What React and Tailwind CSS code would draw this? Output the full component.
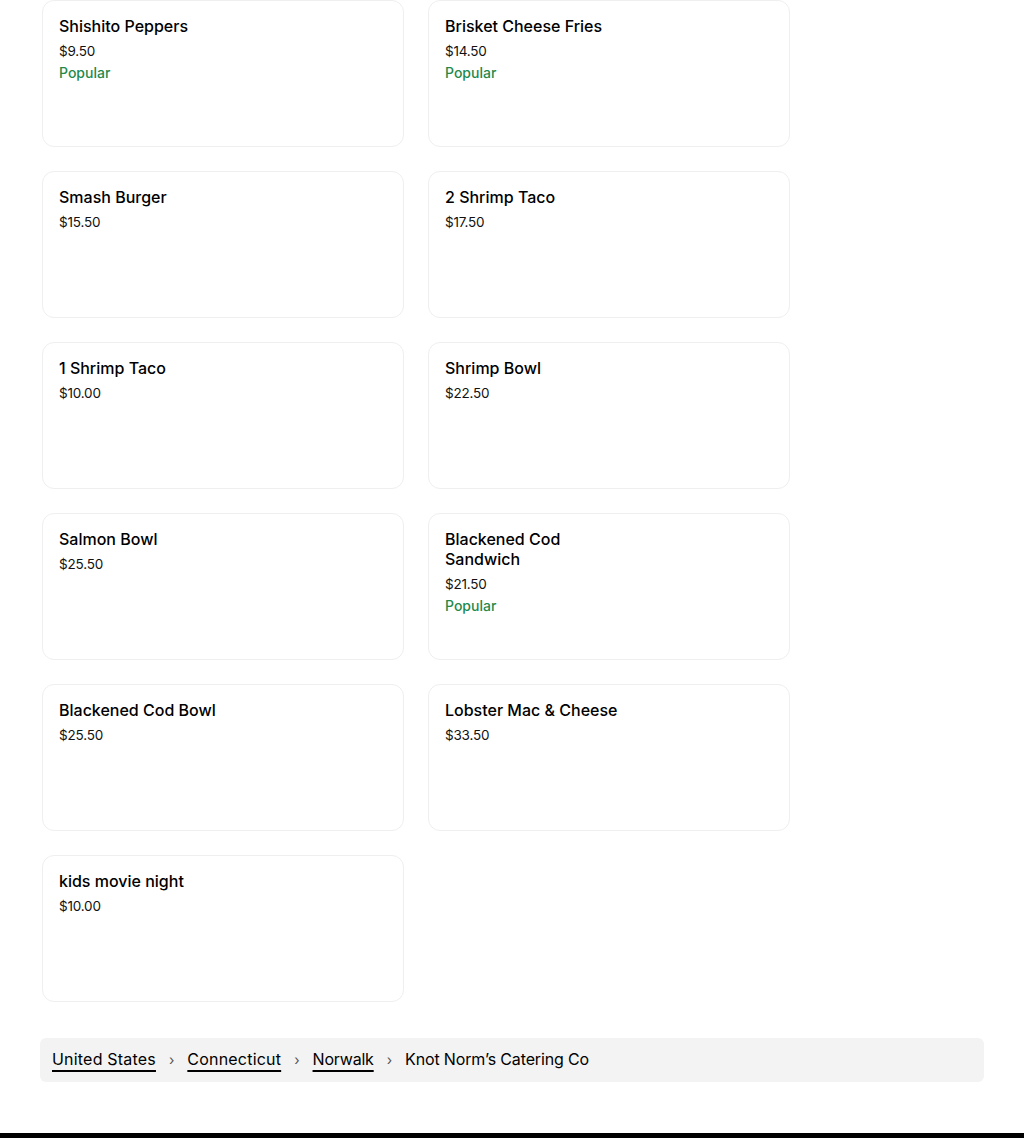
import React from "react";

const items = [
  { name: "Shishito Peppers", price: "$9.50", popular: true },
  { name: "Brisket Cheese Fries", price: "$14.50", popular: true },
  { name: "Smash Burger", price: "$15.50" },
  { name: "2 Shrimp Taco", price: "$17.50" },
  { name: "1 Shrimp Taco", price: "$10.00" },
  { name: "Shrimp Bowl", price: "$22.50" },
  { name: "Salmon Bowl", price: "$25.50" },
  { name: "Blackened Cod Sandwich", price: "$21.50", popular: true },
  { name: "Blackened Cod Bowl", price: "$25.50" },
  { name: "Lobster Mac & Cheese", price: "$33.50" },
  { name: "kids movie night", price: "$10.00" },
];

function Card({ item }) {
  return (
    <div className="h-[147px] rounded-xl border border-[#efefef] bg-white px-4 pt-[15px]">
      <div className="w-[175px]">
        <div className="text-[16px] leading-[20px] font-medium text-[#000]">{item.name}</div>
        <div className="mt-[5px] text-[13.5px] leading-[20px] text-[#111] tracking-[-0.2px]">{item.price}</div>
        {item.popular && (
          <div className="mt-[2px] text-[14px] leading-[20px] font-medium text-[#1f8a4c]">Popular</div>
        )}
      </div>
    </div>
  );
}

export default function App() {
  return (
    <div className="bg-white min-h-[1138px] flex flex-col" style={{ fontFamily: "Inter, 'Open Sans', sans-serif" }}>
      <div className="px-[42px] pt-0">
        <div className="grid grid-cols-[362px_362px] gap-x-[24px] gap-y-[24px]">
          {items.map((it) => (
            <Card key={it.name} item={it} />
          ))}
        </div>
      </div>
      <div className="px-[40px] mt-[36px]">
        <div className="h-[44px] rounded-md bg-[#f3f3f3] px-3 pb-[2px] flex items-center text-[16px] text-black">
          <a className="underline underline-offset-[5px] decoration-[1.5px] tracking-[0.2px]">United States</a>
          <span className="mx-[13px] text-[14px] text-[#555]">›</span>
          <a className="underline underline-offset-[5px] decoration-[1.5px] tracking-[0.2px]">Connecticut</a>
          <span className="mx-[13px] text-[14px] text-[#555]">›</span>
          <a className="underline underline-offset-[5px] decoration-[1.5px] tracking-[-0.2px]">Norwalk</a>
          <span className="mx-[13px] text-[14px] text-[#555]">›</span>
          <span className="tracking-[-0.15px]">Knot Norm’s Catering Co</span>
        </div>
      </div>
      <div className="mt-[51px] flex-1 bg-black min-h-[5px]"></div>
    </div>
  );
}
